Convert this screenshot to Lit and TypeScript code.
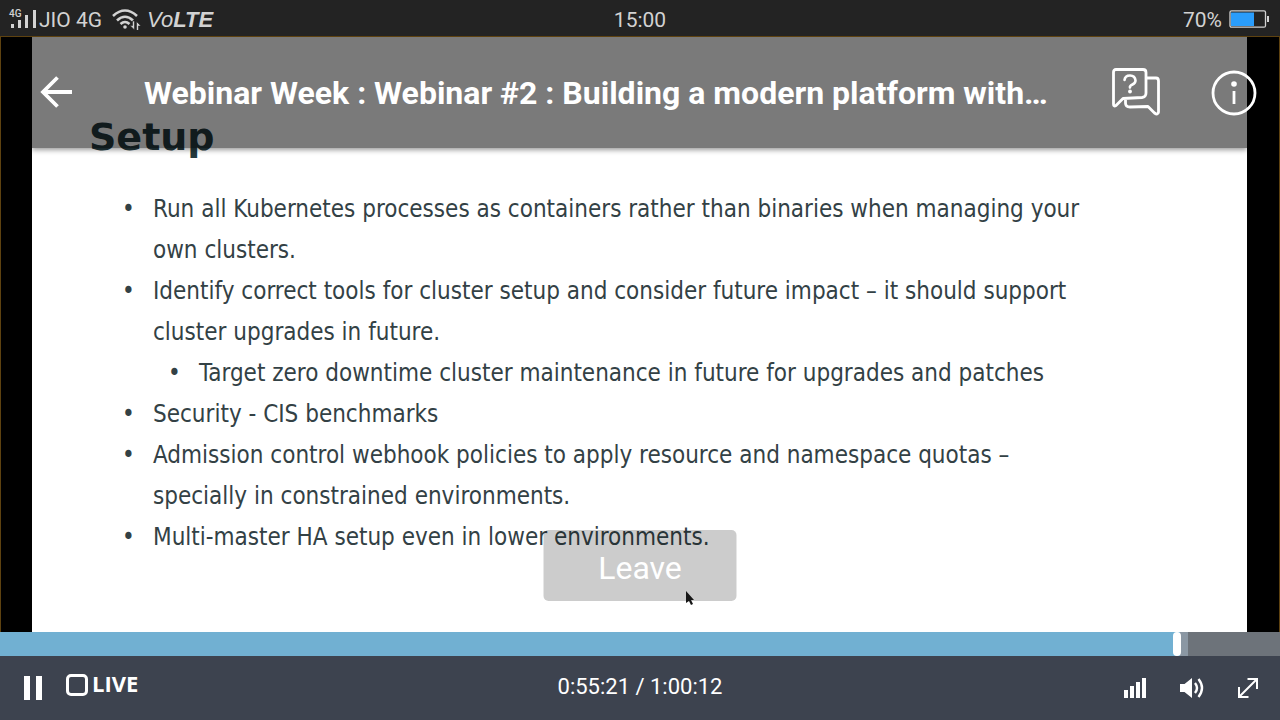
import { LitElement, html, css } from "lit";
import { customElement, state } from "lit/decorators.js";

@customElement("status-bar")
class StatusBar extends LitElement {
  static styles = css`
    :host {
      display: grid;
      grid-template-columns: 1fr auto 1fr;
      align-items: center;
      height: 36px;
      padding: 0 8px;
      background: #232323;
      color: #d2d2d2;
      font: 21px/36px Roboto, sans-serif;
    }
    .left, .right { display: flex; align-items: center; }
    .left { gap: 2px; }
    .clock, .carrier, .level { padding-top: 2px; }
    .right { justify-content: flex-end; gap: 7px; padding-right: 2px; }
    .right svg { display: block; }
    .wifi { margin: 0 4px 0 8px; }
    .volte { font: italic 22px/36px "Liberation Sans", sans-serif; padding-top: 2px; }
    svg { flex: none; }
  `;
  render() {
    return html`
      <div class="left">
        <svg width="29" height="22" viewBox="0 0 29 22" fill="#d2d2d2" aria-hidden="true">
          <text x="1" y="9" font-family="Roboto" font-weight="500" font-size="10">4G</text>
          <path d="M3 16h3v4H3zM10 12h3v8h-3zM17 7h3v13h-3zM25 2h3v18h-3z" />
        </svg>
        <span class="carrier">JIO 4G</span>
        <svg class="wifi" width="29" height="22" viewBox="0 0 29 22" fill="none" stroke="#d2d2d2" stroke-width="2.6" aria-hidden="true">
          <path d="M1 8Q13-3 25 8M5 12.500Q13 5 21 12.500M8.500 16Q13 12 17.500 16" />
          <circle cx="13" cy="19" r="1.800" fill="#d2d2d2" stroke="none" />
          <path d="M22.500 13v9l-4.500-4.500h2.500V13zM24.500 22.500v-9l4.500 4.500h-2.500v4.500z" fill="#d2d2d2" stroke="#232323" stroke-width=".6" />
        </svg>
        <span class="volte">Vo<b>LTE</b></span>
      </div>
      <span class="clock">15:00</span>
      <div class="right">
        <span class="level">70%</span>
        <svg width="41" height="18" viewBox="0 0 41 18" aria-hidden="true">
          <rect x="1" y=".8" width="35.500" height="16.400" rx="1.500" fill="none" stroke="#d2d2d2" stroke-width="1.300" />
          <path d="M2 2.500h23v13.500H2z" fill="#2a9dfb" />
          <path d="M38 6h2v6h-2z" fill="#d2d2d2" />
        </svg>
      </div>
    `;
  }
}

@customElement("slide-view")
class SlideView extends LitElement {
  static styles = css`
    :host {
      display: block;
      box-sizing: border-box;
      background: #fff;
      color: #334145;
      padding: 76px 160px 40px 57px;
      font: 24px/41px "DejaVu Sans Condensed", "DejaVu Sans", sans-serif;
    }
    h1 { margin: 0 0 28px; font: bold 38px/48px "DejaVu Sans", sans-serif; color: #24393e; }
    ul { list-style: none; margin: 0; padding: 0 0 0 32px; }
    ul ul { padding-left: 14px; }
    li { position: relative; padding-left: 32px; }
    li::before { content: "•"; position: absolute; left: 1px; }
  `;
  render() {
    return html`
      <h1>Setup</h1>
      <ul>
        <li>Run all Kubernetes processes as containers rather than binaries when managing your own clusters.</li>
        <li>Identify correct tools for cluster setup and consider future impact – it should support cluster upgrades in future.
          <ul><li>Target zero downtime cluster maintenance in future for upgrades and patches</li></ul>
        </li>
        <li>Security - CIS benchmarks</li>
        <li>Admission control webhook policies to apply resource and namespace quotas – specially in constrained environments.</li>
        <li>Multi-master HA setup even in lower environments.</li>
      </ul>
    `;
  }
}

@customElement("player-controls")
class PlayerControls extends LitElement {
  @state() private position = 3331;
  private duration = 3612;

  static styles = css`
    :host { display: block; background: #3d434f; color: #fff; font: 22px/60px Roboto, sans-serif; }
    .seek {
      appearance: none;
      display: block;
      width: 100%;
      height: 24px;
      margin: 0;
      background: linear-gradient(to right, #71b0d2 var(--played), #8b97a3 var(--played), #8b97a3 var(--loaded), #6d737a var(--loaded));
    }
    .seek::-webkit-slider-thumb { appearance: none; width: 8px; height: 24px; border-radius: 4px; background: #fff; }
    .row { display: grid; grid-template-columns: 1fr auto 1fr; align-items: center; height: 64px; padding: 0 20px; }
    .left, .right { display: flex; align-items: center; }
    .left { gap: 20px; }
    .right { justify-content: flex-end; gap: 30px; }
    button {
      display: flex;
      align-items: center;
      gap: 4px;
      margin: 0;
      padding: 0;
      border: 0;
      background: none;
      color: inherit;
      font: bold 22px/52px "Open Sans", sans-serif;
    }
    .live { padding-bottom: 6px; }
    .live span { padding-bottom: 4px; }
    svg { display: block; }
    time { padding-bottom: 2px; }
  `;
  private seek(e: Event) {
    this.position = Number((e.target as HTMLInputElement).value);
  }
  render() {
    const played = (this.position / this.duration) * 100;
    return html`
      <input class="seek" type="range" aria-label="Seek" min="0" max=${this.duration} .value=${String(this.position)}
        @input=${this.seek} style="--played:${played}%;--loaded:92.8%" />
      <div class="row">
        <div class="left">
          <button aria-label="Pause">
            <svg width="26" height="24" viewBox="0 0 26 24" fill="#fff"><path d="M4 0h6v24H4zM16 0h6v24h-6z" /></svg>
          </button>
          <button class="live">
            <svg width="22" height="22" viewBox="0 0 22 22"><rect x="1.500" y="1.500" width="19" height="19" rx="3.500" fill="none" stroke="#fff" stroke-width="3" /></svg>
            <span>LIVE</span>
          </button>
        </div>
        <time>0:55:21 / 1:00:12</time>
        <div class="right">
          <button aria-label="Quality">
            <svg width="26" height="24" viewBox="0 0 26 24" fill="#fff"><path d="M2 14h4v8H2zM8 10h4v12H8zM14 6h4v16h-4zM20 2h4v20h-4z" /></svg>
          </button>
          <button aria-label="Volume">
            <svg width="28" height="24" viewBox="0 0 28 24" fill="#fff"><path d="M2 8h4.500L14 2v20l-7.500-6H2z" /><path d="M17 7q4 5 0 10M20.500 3q7 9 0 18" fill="none" stroke="#fff" stroke-width="2.400" /></svg>
          </button>
          <button aria-label="Full screen">
            <svg width="24" height="24" viewBox="0 0 24 24" fill="none" stroke="#fff" stroke-width="2"><path d="M11.500 3H21v10M3 11v10h9.500M3.500 20.500l17-17" /></svg>
          </button>
        </div>
      </div>
    `;
  }
}

@customElement("app-root")
class AppRoot extends LitElement {
  static styles = css`
    :host { display: grid; grid-template-rows: auto 1fr auto; min-height: 100vh; background: #000; }
    .stage {
      position: relative;
      display: grid;
      padding: 0 32px 0 31px;
      border: solid #5e4210;
      border-width: 1px 1px 0;
      margin: 0;
    }
    .bar {
      position: absolute;
      inset: 0 0 auto;
      display: flex;
      align-items: center;
      height: 111px;
      box-sizing: border-box;
      padding: 0 22px 0 38px;
      color: #fff;
    }
    .shade {
      position: absolute;
      inset: 0 32px auto 31px;
      height: 111px;
      background: rgba(0, 0, 0, 0.52);
      box-shadow: 0 2px 5px rgba(0, 0, 0, 0.4);
      clip-path: inset(0 0 -8px 0);
    }
    h2 {
      flex: 1;
      min-width: 0;
      margin: 0 0 0 71px;
      overflow: hidden;
      white-space: nowrap;
      text-overflow: ellipsis;
      font: bold 32px/44px Roboto, sans-serif;
    }
    button { margin: 0; padding: 0; border: 0; background: none; color: inherit; }
    .bar svg { display: block; }
    .info { margin-left: 50px; }
    .leave {
      position: absolute;
      left: 50%;
      bottom: 31px;
      transform: translateX(-50%);
      box-sizing: border-box;
      width: 193px;
      height: 71px;
      padding-top: 4px;
      border-radius: 5px;
      background: rgba(0, 0, 0, 0.2);
      color: #fff;
      font: 32px/40px Roboto, sans-serif;
    }
    .pointer { position: absolute; left: calc(50% + 45px); bottom: 26px; }
  `;
  render() {
    return html`
      <status-bar></status-bar>
      <main class="stage">
        <slide-view></slide-view>
        <div class="shade"></div>
        <header class="bar">
          <button aria-label="Back">
            <svg width="34" height="36" viewBox="0 0 34 36" fill="none" stroke="#fff" stroke-width="3.800"><path d="M33 17H4M18.500 2.500L4 17l14.500 14.500" /></svg>
          </button>
          <h2>Webinar Week : Webinar #2 : Building a modern platform with…</h2>
          <button aria-label="Questions">
            <svg width="50" height="52" viewBox="0 0 50 52" fill="none" stroke="#fff" stroke-width="2.800" stroke-linejoin="round" stroke-linecap="round">
              <path d="M5 2.500H32Q35 2.500 35 5.500V26Q35 30 31 30.500L12 31.500 5 38.500Q2.500 40 2.500 37V5Q2.500 2.500 5 2.500ZM35 11H45Q47.500 11 47.500 14V45Q47 48.500 43.500 46L37 39.500 19 40Q14.500 40 14.500 36V32" />
              <path d="M13.500 13Q14 8.500 19 8.500T24.500 13.500Q24.500 16 21.500 17.500T19 20.500" stroke-width="2.600" />
              <circle cx="19" cy="24.500" r="1.900" fill="#fff" stroke="none" />
            </svg>
          </button>
          <button class="info" aria-label="Information">
            <svg width="46" height="46" viewBox="0 0 46 46" fill="none" stroke="#fff" stroke-width="2.800"><circle cx="23" cy="23" r="21" /><circle cx="23" cy="14" r="2.800" fill="#fff" stroke="none" /><path d="M23 21v13" /></svg>
          </button>
        </header>
        <button class="leave">Leave</button>
        <svg class="pointer" width="10" height="16" viewBox="0 0 10 16" aria-hidden="true"><path d="M1 1l8 9H6l2 4-2 1-2-4-3 2z" fill="#161616" /></svg>
      </main>
      <player-controls></player-controls>
    `;
  }
}
